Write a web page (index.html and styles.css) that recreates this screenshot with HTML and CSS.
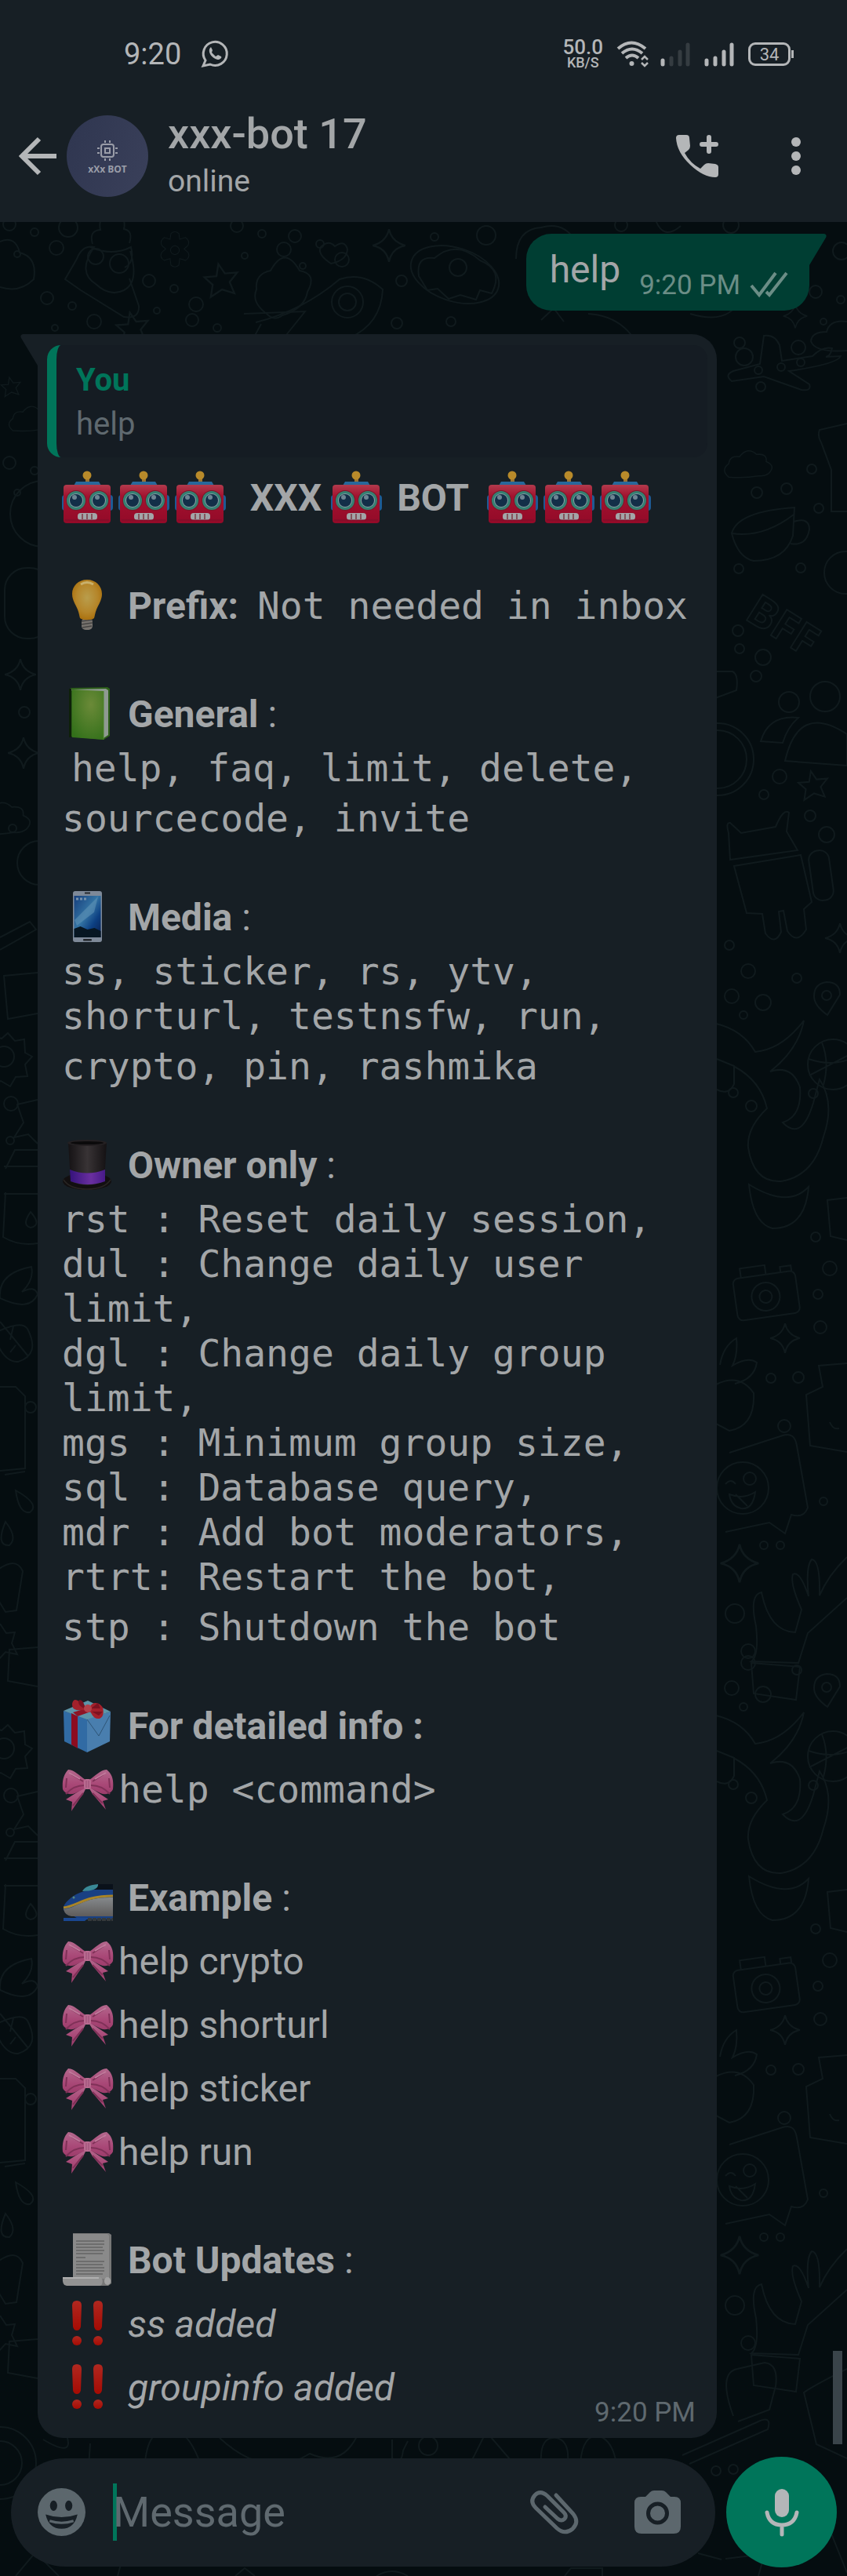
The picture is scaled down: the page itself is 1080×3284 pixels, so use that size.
FILE: index.html
```html
<!DOCTYPE html>
<html lang="en">
<head>
<meta charset="utf-8">
<meta name="viewport" content="width=device-width, initial-scale=1">
<title>xxx-bot 17</title>
<link rel="stylesheet" href="styles.css">
</head>
<body>
<svg class="defs" aria-hidden="true">
  <defs>
    <linearGradient id="g-red" x1="0" y1="0" x2="0" y2="1"><stop offset="0" stop-color="#b23a4c"/><stop offset=".3" stop-color="#a3122f"/><stop offset="1" stop-color="#930a28"/></linearGradient>
    <radialGradient id="g-bulb" cx=".5" cy=".45" r=".6"><stop offset="0" stop-color="#b99d4c"/><stop offset=".6" stop-color="#b5862a"/><stop offset="1" stop-color="#a86c08"/></radialGradient>
    <radialGradient id="g-book" cx=".6" cy=".3" r=".8"><stop offset="0" stop-color="#6b8a38"/><stop offset="1" stop-color="#33701a"/></radialGradient>
    <linearGradient id="g-phone" x1="0" y1="0" x2="1" y2="1"><stop offset="0" stop-color="#163e7c"/><stop offset=".45" stop-color="#3474a4"/><stop offset=".7" stop-color="#0c3f82"/><stop offset="1" stop-color="#0a1e4d"/></linearGradient>
    <linearGradient id="g-hat"><stop offset="0" stop-color="#151214"/><stop offset=".5" stop-color="#383335"/><stop offset="1" stop-color="#141113"/></linearGradient>
    <linearGradient id="g-band"><stop offset="0" stop-color="#35137b"/><stop offset=".6" stop-color="#6a2f9f"/><stop offset="1" stop-color="#471a88"/></linearGradient>
    <linearGradient id="g-bow" x1="0" y1="0" x2="0" y2="1"><stop offset="0" stop-color="#b3688d"/><stop offset=".6" stop-color="#a94877"/><stop offset="1" stop-color="#9c3c6b"/></linearGradient>
    <linearGradient id="g-train" x1="0" y1="0" x2="0" y2="1"><stop offset="0" stop-color="#85898c"/><stop offset="1" stop-color="#5e5c5b"/></linearGradient>
    <linearGradient id="g-bang" x1="0" y1="0" x2="0" y2="1"><stop offset="0" stop-color="#b02820"/><stop offset="1" stop-color="#a50b03"/></linearGradient>

    <symbol id="robot" viewBox="0 0 66 68">
      <rect x="30" y="10" width="5" height="9" fill="#9a7130"/><circle cx="32" cy="6" r="5.500" fill="#b88a2a"/>
      <path d="M15 19l3-5h29l3 5z" fill="#28689a"/>
      <rect x="0" y="31" width="8" height="20" rx="4" fill="#1e5a94"/><rect x="57" y="31" width="8" height="20" rx="4" fill="#1e5a94"/>
      <rect x="2" y="18" width="60" height="49" rx="4" fill="url(#g-red)"/>
      <circle cx="18" cy="38" r="13" fill="#7c1728"/><circle cx="47" cy="38" r="13" fill="#7c1728"/>
      <circle cx="18" cy="38" r="12" fill="#358072"/><circle cx="47" cy="38" r="12" fill="#358072"/>
      <circle cx="18" cy="38" r="9" fill="#889ba4"/><circle cx="47" cy="38" r="9" fill="#889ba4"/>
      <circle cx="18" cy="38" r="8" fill="#132f48"/><circle cx="47" cy="38" r="8" fill="#132f48"/>
      <circle cx="16" cy="34" r="3" fill="#6d8593"/><circle cx="45" cy="34" r="3" fill="#6d8593"/>
      <rect x="20" y="54" width="25" height="9" rx="4" fill="#a3a5a8"/><path d="M26 55v7M32 55v7M38 55v7" stroke="#7b3942" stroke-width="1.500"/>
      <path d="M4 63h56" stroke="#77102a" stroke-width="1"/>
    </symbol>
    <symbol id="bulb" viewBox="0 0 66 68">
      <rect x="25" y="50" width="14" height="15" rx="5" fill="#77736e"/><path d="M25 54l14-2M25 58l14-2M26 62l12-2" stroke="#454443" stroke-width="1.500"/>
      <path d="M32 1c11 0 19 8 19 18 0 8-4 13-7 20-2 5-2 8-3 11-3 3-15 3-18 0-1-3-1-6-3-11-3-7-7-12-7-20C13 9 21 1 32 1z" fill="url(#g-bulb)"/>
      <path d="M24 7q8-5 16 0" stroke="#c9b16c" stroke-width="3" fill="none"/>
    </symbol>
    <symbol id="book" viewBox="0 0 66 68">
      <path d="M11 1l47-1 3 2v60l-8 5-42-4z" fill="#2d5f19"/><path d="M12 3l44-1 3 2v57l-6 4z" fill="#8f9a92"/>
      <path d="M13 3l40 2v62l-40-3z" fill="url(#g-book)"/><path d="M9 2h3v62H9z" fill="#0e2009"/><path d="M53 5v62" stroke="#4a8429" stroke-width="1"/>
    </symbol>
    <symbol id="phone" viewBox="0 0 66 68">
      <rect x="14" y="1" width="37" height="65" rx="3" fill="#7e8998"/><rect x="15.500" y="7" width="34" height="53" fill="url(#g-phone)"/>
      <path d="M16 38l30-30-5 20-22 17z" fill="#5f92b5" opacity=".6"/><path d="M15.500 49l8-3 9 4 9-2 8 4v8h-34z" fill="#071622"/>
      <rect x="29" y="2.500" width="7" height="2" fill="#272a2e"/><rect x="27" y="62" width="11" height="2.500" rx="1" fill="#22262b"/>
      <path d="M18 11h3M23 11h3M28 11h3" stroke="#7791ac" stroke-width="3"/>
    </symbol>
    <symbol id="hat" viewBox="0 0 66 68">
      <ellipse cx="32" cy="55" rx="31" ry="11" fill="#120f10"/><path d="M2 53q8 12 30 12t30-12" stroke="#292523" stroke-width="1.500" fill="none"/>
      <path d="M8 6q24-5 49 0l-3 49q-22 9-43 0z" fill="url(#g-hat)"/><path d="M10 40q22 9 45 0v15q-22 8-44 0z" fill="url(#g-band)"/>
      <ellipse cx="32" cy="6" rx="25" ry="4" fill="#242022"/><ellipse cx="32" cy="6" rx="21" ry="2" fill="#0b0a0b"/>
    </symbol>
    <symbol id="gift" viewBox="0 0 66 68">
      <path d="M2 15L32 25v43L3 54z" fill="#316ba4"/><path d="M32 25l30-9-1 38-29 14z" fill="#497eae"/><path d="M2 15L33 2l29 14-30 10z" fill="#5d94a8"/>
      <path d="M12 18l8 4v41l-8-5z" fill="#8c0c20"/><path d="M14 17L44 8l7 3-31 11z" fill="#8d1525"/>
      <path d="M32 26l15 21 14-26" stroke="#2e5577" stroke-width="1" fill="none"/>
      <path d="M31 14c-10-14-16-17-18-8 0 8 4 9 18 8zM34 14c4-14 15-9 18-3 2 7 0 14-6 14-7 0-8-8-12-11z" fill="#a3202b"/><path d="M30 12c-3-12-8-12-9-9 0 5 4 8 9 9zM37 12l9-7 3 7zM38 16l9 5 5-5z" fill="#7b1220"/><circle cx="33" cy="12" r="5" fill="#b5414a"/>
    </symbol>
    <symbol id="bow" viewBox="0 0 66 68">
      <path d="M30 31L5 47l8 3-1 12 16-24 4-8zM35 31l24 16-7 2 4 11-17-20-6-10z" fill="url(#g-bow)"/>
      <path d="M30 22C21 16 17 10 8 9 2 15 0 24 1 34c2 5 9 8 16 5l14-7zM35 22c9-6 13-12 22-13 8 6 9 15 8 25-2 5-9 8-16 5l-14-7z" fill="url(#g-bow)"/>
      <path d="M29 29Q15 29 5 40M37 29q14 0 24 11M27 24L12 15M39 24l14-9M6 20l-1 12M60 20l1 12M27 39L14 55M39 39l13 13" stroke="#803158" stroke-width="2" fill="none"/>
      <path d="M9 13l14 8M56 13l-14 8" stroke="#c07b9c" stroke-width="2"/>
      <rect x="28" y="21" width="9" height="13" rx="3" fill="#b96b90"/><path d="M31 23v9M34 23v9" stroke="#984d75" stroke-width="1"/>
    </symbol>
    <symbol id="train" viewBox="0 0 66 68">
      <path d="M45 17h20v12H30z" fill="#0a111a"/><path d="M65 24v38H22L2 50C0 44 8 36 18 30q10-5 22-6z" fill="#194083"/>
      <path d="M2 49c18-2 26-16 63-15v24H12q-8-1-10-9z" fill="url(#g-train)"/><path d="M2 47c18-2 26-15 63-15" stroke="#a98427" stroke-width="3" fill="none"/>
      <path d="M26 26c3-6 10-8 20-9 1 6-8 9-20 9z" fill="#3a8997"/><path d="M2 60h32l-5 4H2z" fill="#1a4791"/><path d="M33 62h32" stroke="#35393a" stroke-width="4" stroke-dasharray="5 1"/><circle cx="15" cy="34" r="1.500" fill="#58877e"/>
    </symbol>
    <symbol id="scroll" viewBox="0 0 66 68">
      <path d="M14 0h46l3 2v62l-4 3H14z" fill="#777777"/><path d="M14 1h44l2 2v55H14z" fill="#8a8a8a"/>
      <path d="M18 10h36M18 14h36M18 18h34M18 22h36M18 26h34M18 31h12M18 36h36M18 40h34M18 44h36M18 48h36M18 52h34" stroke="#646464" stroke-width="1.500"/>
      <path d="M1 56h47c5 0 5 11 0 11H6q-6 0-5-11z" fill="#929292"/><path d="M1 57h46" stroke="#b0b0b0" stroke-width="2"/><ellipse cx="58" cy="61" rx="4" ry="5" fill="#a2a2a2"/>
    </symbol>
    <symbol id="bangs" viewBox="0 0 66 68">
      <g fill="url(#g-bang)"><path d="M19 5q6 0 6 6l-1 27q-1 5-5 5t-5-5l-1-27q0-6 6-6zM46 5q6 0 6 6l-1 27q-1 5-5 5t-5-5l-1-27q0-6 6-6z"/><circle cx="19" cy="56" r="6"/><circle cx="46" cy="56" r="6"/></g>
    </symbol>
    <symbol id="flower" viewBox="-50 -50 100 100"><circle r="10"/><path d="M-9-38q9-8 18 0l2 13 13-4q11 7 6 18l-9 8 9 8q6 12-6 18l-13-4-2 15q-9 8-18 0l-2-15-13 4q-12-6-6-18l9-8-9-8q-5-11 6-18l13 4z"/></symbol>
    <symbol id="star" viewBox="-20 -20 40 40"><path d="M-3-17L4-7l13-1-8 10 5 12-13-4-12 8 2-13-9-8 13-1z"/></symbol>
    <symbol id="spark" viewBox="-20 -20 40 40"><path d="M0-18Q3-4 18 0 3 3 0 18-3 3-18 0-3-4 0-18z"/></symbol>
    <symbol id="cloud" viewBox="-50 -30 100 60"><path d="M-38 20q-14-12 0-22 2-15 18-12 14-18 29-4 18-2 16 12 17 7 4 20-7 5-17 4-24 4-50 2z"/></symbol>
    <g id="bits"><circle cx="0" cy="0" r="8"/><circle cx="32" cy="10" r="5"/><circle cx="10" cy="38" r="4"/><circle cx="60" cy="30" r="9"/></g>
    <g id="tile">
      <path d="M1054 1252q17 0 17 16l-16 26q-17-12-17-24 0-16 16-18z"/><circle cx="1054" cy="1269" r="6"/>
      <circle cx="954" cy="1238" r="9"/><circle cx="933" cy="1270" r="9"/><circle cx="973" cy="1278" r="10"/><circle cx="1016" cy="1247" r="6"/><circle cx="948" cy="1294" r="5"/>
      <path d="M913 1305q34 8 50 36 34-3 62-40-7 37-43 65 28-9 38 20 3 37-22 45 24 25 39-25l8-30q20 30 5 73-12 50-54 57-35 2-42-43-2-25 24-50-8-35-41-53M955 1510q5 50 30 56 42 0 46-53-26 28-76-3z"/>
      <circle cx="1062" cy="1357" r="32"/><path d="M1031 1350q35 12 63-5M1048 1329q10 25 2 54M1032 1371l60-31"/>
      <path d="M914 1350l22 9v23q-7 15-22 7M1080 1527l-25 3 4 46 21 5"/><circle cx="935" cy="1393" r="6"/><circle cx="958" cy="1410" r="7"/><circle cx="1037" cy="1394" r="6"/>
      <g transform="rotate(-8 976 1650)"><rect x="937" y="1625" width="80" height="54" rx="7"/><circle cx="976" cy="1653" r="18"/><circle cx="976" cy="1653" r="8"/><path d="M948 1625v-12h32v12M999 1625v-7h14v7"/></g>
      <circle cx="1040" cy="1577" r="6"/><circle cx="1058" cy="1617" r="9"/><circle cx="1043" cy="1650" r="6"/><circle cx="1046" cy="1692" r="8"/>
      <use href="#spark" x="980" y="1685" width="42" height="42"/>
      <path d="M913 1765q30-15 48 11 2 42-31 48l-17-9M918 1740q4-24 21-34 2 21-5 35 20-12 31-4-3 21-28 27"/>
      <circle cx="983" cy="1757" r="6"/><circle cx="1018" cy="1756" r="7"/><circle cx="1000" cy="1818" r="8"/>
      <path d="M1080 1738l-36 3 5 27-21 10 5 65 47 8"/><path d="M1058 1813q4 10 12 8"/>
      <path d="M930 1852l68-22q15-5 18 13l14 79q-5 14-21 9l-8 24-20-14-56 12"/><circle cx="947" cy="1897" r="33"/><path d="M930 1905q18 7 33-3-3 23-18 21-13-3-15-18zM938 1905l15 15M925 1892q7-8 13 0"/><circle cx="956" cy="1885" r="8"/>
      <circle cx="1050" cy="1914" r="5"/><circle cx="974" cy="1970" r="5"/><circle cx="995" cy="1970" r="5"/>
      <use href="#spark" x="916" y="1966" width="54" height="54"/>
      <path d="M1080 1985q-24 23-35 49 1-45-10-46-8 9-4 47-11-33-20-28-4 11 11 45l-8 29q-33-1-43-51-16 3-7 43 4 38-6 45l60 2 12-38 50-45M958 2120l62 5-5 42-54-8z"/>
      <circle cx="937" cy="2057" r="12"/><circle cx="954" cy="2105" r="9"/>
      <path d="M-10 1320l12 4 8-7 9 10 12-2 1 17 9 5-9 10 3 15-15 1-7 12-12-7-10 4"/><circle cx="5" cy="1347" r="13"/>
      <circle cx="14" cy="1407" r="9"/><path d="M48 1402l-26 6 8 23-12 19 18-4 12 12"/><circle cx="13" cy="1454" r="5"/>
      <path d="M5 1487h43M7 1490l12-24h29M7 1520l-3 57q20 12 44 8M5 1522h43M39 1545q15 17 0 20-12-3 0-20z"/>
      <path d="M0 1655q-3-32 40-40 4 16-12 32 16-9 20 3-10 23-48 5zM-8 1700q35-18 43-6 17 33-12 42-20 1-31-36M0 1685l36 44M13 1708l4-17M20 1715l-7 9"/>
      <path d="M0 1768h20l12 12v92l-32 3M6 1880l26-4"/><circle cx="39" cy="1794" r="7"/>
      <path d="M20 1900q4 30 18 28 14-10-18-28zM7 1940q-13 31 5 30 11-10-5-30zM-5 2003q25-20 34 0l-8 50-14 2-12-20M0 2070l8 12 11-1-4 14 7 14-15-3-9 10M48 2100l-36 3-2 40 38 7"/>
    </g>
  </defs>
</svg>

<header class="top">
  <div class="status">
    <div class="status-side">
      <time class="clock">9:20</time>
      <svg class="wa" viewBox="0 0 34 34" fill="none" stroke="#b4b6b8" stroke-width="3"><path d="M2 32l3-7a15 15 0 1 1 6 5z"/><path d="M11 9c-4 5 3 15 11 15 3-1 4-3 3-4l-4-2-3 2-5-5 1-3-2-4z" fill="#b4b6b8" stroke="none"/></svg>
    </div>
    <div class="status-side">
      <div class="speed"><span class="rate">50.0</span><span class="unit">KB/S</span></div>
      <svg class="wifi" viewBox="0 0 40 32" fill="none" stroke="#b4b6b8" stroke-width="4"><path d="M1 9q17-15 35 0M6 15q13-11 26 0M11 21q8-7 16 0"/><circle cx="18.500" cy="28" r="3" fill="#b4b6b8" stroke="none"/><path d="M31 23l4-4 4 4M31 27l4 4 4-4" stroke-width="2.500"/></svg>
      <svg class="signal" viewBox="0 0 38 32" stroke-width="5" stroke-linecap="round"><path d="M3 24v5" stroke="#b4b6b8"/><path d="M14 21v8M25 13v16M35 4v25" stroke="#353c41"/></svg>
      <svg class="signal" viewBox="0 0 38 32" stroke-width="5" stroke-linecap="round" stroke="#b4b6b8"><path d="M3 24v5M14 21v8M25 13v16M35 4v25"/></svg>
      <div class="battery">34</div>
    </div>
  </div>
  <div class="appbar">
    <button class="back" aria-label="Back"><svg viewBox="0 0 48 48" fill="none" stroke="#b4b6b8" stroke-width="6"><path d="M48 24H5M26 2L4 24l22 22"/></svg></button>
    <div class="avatar"><svg viewBox="0 0 26 26" fill="none" stroke="#9a9da8" stroke-width="2"><rect x="5" y="5" width="16" height="16" rx="3"/><rect x="10" y="10" width="6" height="6"/><path d="M10 0v3M16 0v3M10 23v3M16 23v3M0 10h3M0 16h3M23 10h3M23 16h3"/></svg><span>xXx BOT</span></div>
    <div class="who"><h1>xxx-bot 17</h1><p>online</p></div>
    <button class="call" aria-label="Call"><svg viewBox="0 0 54 54" fill="#b4b6b8"><path d="M4 0h9q4 0 4 4l1 10q0 3-2 5l-5 4q7 13 20 20l5-5q2-2 5-2l9 1q4 1 4 4v9q0 4-4 4Q35 54 18 38T0 4q0-4 4-4z"/><path d="M42 3v18M33 12h18" stroke="#b4b6b8" stroke-width="6" stroke-linecap="round"/></svg></button>
    <button class="more" aria-label="More options"><svg viewBox="0 0 12 48" fill="#b4b6b8"><circle cx="6" cy="6" r="6"/><circle cx="6" cy="24" r="6"/><circle cx="6" cy="42" r="6"/></svg></button>
  </div>
</header>

<main class="chat">
  <svg class="wallpaper" viewBox="0 283 1080 3001" preserveAspectRatio="xMidYMin slice" fill="none" stroke="#101a1d" stroke-width="2" aria-hidden="true">
    <use href="#bits" x="12" y="286"/><circle cx="87" cy="290" r="12"/><path d="M118 311q-5-17 10-18-4-17 14-21 20 2 16 20 12 2 7 18M115 315q28 12 52 0 5 20-8 26M98 330q7-18 22-15-22 32 2 47 18 17 36 8 20-10 8-50M98 330l-15 26 20 14 55 34q20 3 19-14l-12-35"/><circle cx="122" cy="327" r="10"/><circle cx="152" cy="336" r="12"/>
    <use href="#flower" x="195" y="284" width="56" height="70"/><use href="#bits" x="302" y="288"/><use href="#bits" x="376" y="301"/><use href="#star" x="258" y="333" width="48" height="48"/>
    <path d="M340 400q-20-15-13-31-2-20 18-24 18-33 37 0 23 4 10 27-3 21-32 30-10 8-20-2zM422 336q-18-12-13-21 10-10 18-1 13-9 16 4-1 14-21 18z"/>
    <path d="M0 308q20-8 25 14 23 6 18 34-18 18-43 10M326 411q60-15 107-55 30-10 55 13-2 44-43 62M311 400l78-3-24 30M333 413l-12 22"/><circle cx="443" cy="385" r="20"/><circle cx="443" cy="385" r="11"/>
    <use href="#spark" x="473" y="286" width="46" height="54"/><circle cx="584" cy="341" r="11"/><ellipse cx="580" cy="350" rx="58" ry="34" transform="rotate(18 580 350)"/><path d="M534 352q-4-26 20-23 28-24 58 3 31 12 15 42l-15-4-5 12-20-6-15 5-14-13-13 2z"/>
    <circle cx="620" cy="300" r="12"/><circle cx="554" cy="302" r="5"/><circle cx="512" cy="358" r="7"/><circle cx="506" cy="412" r="7"/><circle cx="575" cy="410" r="6"/><use href="#bits" x="60" y="380"/><use href="#bits" x="190" y="358"/><use href="#star" x="146" y="395" width="46" height="46"/><use href="#bits" x="245" y="408"/>
    <path d="M658 330q0-38 32-40 28-8 43 16M835 278q10 30 33 10M690 408l16-15 13 17M750 400q35 2 55 27M880 400q50 15 64-20"/><circle cx="792" cy="287" r="8"/><circle cx="932" cy="287" r="10"/><use href="#bits" x="1040" y="372"/><circle cx="1073" cy="320" r="11"/>
    <use href="#star" x="0" y="470" width="28" height="46"/><use href="#cloud" x="8" y="510" width="70" height="50"/><use href="#bits" x="12" y="590"/><circle cx="55" cy="655" r="42"/><rect x="6" y="724" width="60" height="90" rx="28"/><use href="#spark" x="4" y="830" width="44" height="60"/><use href="#spark" x="8" y="935" width="44" height="50"/><use href="#cloud" x="-38" y="1010" width="90" height="70"/><circle cx="50" cy="1100" r="28"/><circle cx="16" cy="1056" r="5"/><circle cx="31" cy="908" r="7"/><path d="M0 1195l38-20 8 10-46 26M48 1240l-43 4 5 55 38-7"/>
    <use href="#spark" x="992" y="386" width="44" height="34"/><path d="M1080 410q-22-3-26 13-19 0-20 12 5 15 46 12"/>
    <path d="M969 464l5-36q14-2 20 12l3 20 39-6q13-13 25-10-2 10-8 11l19-1q-4 10-66 19l26 17q3 9-10 7l-48-17-41 6q-10-8 2-13z"/><circle cx="943" cy="437" r="7"/><circle cx="949" cy="455" r="11"/><circle cx="1018" cy="443" r="9"/><circle cx="967" cy="472" r="5"/><circle cx="996" cy="468" r="5"/><circle cx="1021" cy="462" r="5"/><circle cx="970" cy="493" r="6"/>
    <use href="#cloud" x="920" y="565" width="76" height="56"/><path d="M1080 540l-35 8q-3 8 2 16l13 35v53h20"/><circle cx="1035" cy="598" r="6"/><circle cx="1003" cy="623" r="7"/><circle cx="965" cy="628" r="7"/><circle cx="1044" cy="648" r="6"/>
    <path d="M933 680q7-28 80-33l-2 36q-10 32-50 32-20-4-28-35 40 6 79-24M1012 665q20-6 20 10-4 22-24 18"/><circle cx="942" cy="725" r="6"/><circle cx="1021" cy="724" r="6"/><circle cx="1078" cy="730" r="27"/>
    <text class="bff" x="948" y="788" transform="rotate(32 948 788)">BFF</text>
    <circle cx="973" cy="838" r="10"/><circle cx="941" cy="804" r="7"/><circle cx="964" cy="862" r="7"/><circle cx="943" cy="827" r="6"/><path d="M912 856h22q8 4 5 24l-27 10"/>
    <circle cx="1006" cy="895" r="13"/><circle cx="1052" cy="888" r="19"/><path d="M970 945q10-34 48-30-14 12-20 32zM1001 970q17-75 79-34v40z"/>
    <circle cx="915" cy="968" r="46"/><circle cx="915" cy="968" r="37"/><circle cx="994" cy="990" r="9"/><circle cx="974" cy="1013" r="6"/><use href="#star" x="1016" y="980" width="42" height="42"/>
    <path d="M931 1096l-2-34q-4-14 2-13l14 13 44-8q10-24 17-18l-3 24 14 24zM936 1104l85-14 14 60-10 9 3 26q-12 20-24 2l-5-26-6 1 3 26q-8 18-20 2l-4-25-20-1z"/><rect x="1034" y="1084" width="26" height="64" rx="12" transform="rotate(-8 1047 1116)"/>
    <circle cx="1033" cy="1040" r="7"/><circle cx="1054" cy="1064" r="10"/><circle cx="930" cy="1205" r="6"/><use href="#spark" x="1050" y="1175" width="42" height="42"/>
    <use href="#tile"/><use href="#tile" y="882"/>
    <path d="M935 3080q-20-55 5-60l35-8q18 2 14 30l-8 30-40 15M870 3130l95-42q20-10 14 9l-100 44M1080 3020q-40 20-55 30l16 66 39 18M55 3110q40 24 30-5M115 3115l-2 30M185 3138q5-46 34-38 18-4 34 34M280 3108q60 55 115 20 40 18 60-22M500 3110v24q12 10 14-10l6-12M600 3140l20-40 30 35M690 3140q-2-35 20-32 16 4 14 30M740 3140q3-38 25-34 15 6 20 30"/><circle cx="546" cy="3118" r="12"/>
    <circle cx="0" cy="3140" r="46"/><circle cx="0" cy="3140" r="28"/><circle cx="913" cy="3150" r="6"/><circle cx="935" cy="3148" r="6"/><path d="M20 3284l25-30 30 30M150 3284l6-22M890 3255l30 8M1060 3230l20 50M925 3262l50-6-8 28M300 3284l12-10 13 10M480 3284q20-12 40 0M720 3284l8-10h40v10"/>
  </svg>

  <section class="messages">
    <article class="bubble out">
      <svg class="tail" viewBox="0 0 22 40" aria-hidden="true"><path d="M0 0h19q4 1 2 5L0 40z" fill="#003e33"/></svg>
      <p>help</p>
      <time>9:20 PM</time>
      <svg class="ticks" viewBox="0 0 48 32" fill="none" stroke="#6b8d86" stroke-width="4"><path d="M1 18l10 12L32 2M20 26l4 4L46 2"/></svg>
    </article>

    <article class="bubble in">
      <svg class="tail" viewBox="0 0 22 40" aria-hidden="true"><path d="M22 0H3Q-1 1 1 5l21 35z" fill="#171f25"/></svg>
      <blockquote><strong>You</strong><span>help</span></blockquote>
      <div class="body">
        <section><h2 class="title"><svg class="emo" role="img" aria-label="Robot"><use href="#robot"/></svg><svg class="emo"><use href="#robot"/></svg><svg class="emo"><use href="#robot"/></svg>  XXX <svg class="emo"><use href="#robot"/></svg> BOT  <svg class="emo"><use href="#robot"/></svg><svg class="emo"><use href="#robot"/></svg><svg class="emo"><use href="#robot"/></svg></h2></section>
        <section><p class="head"><svg class="emo"><use href="#bulb"/></svg> <b>Prefix:</b>  <code>Not needed in inbox</code></p></section>
        <section>
          <p class="head"><svg class="emo"><use href="#book"/></svg> <b>General</b> :</p>
          <p class="mono"> <code>help, faq, limit, delete,</code></p>
          <p class="mono last"><code>sourcecode, invite</code></p>
        </section>
        <section>
          <p class="head"><svg class="emo"><use href="#phone"/></svg> <b>Media</b> :</p>
          <p class="mono"><code>ss, sticker, rs, ytv, shorturl, testnsfw, run,</code></p>
          <p class="mono last"><code>crypto, pin, rashmika</code></p>
        </section>
        <section>
          <p class="head"><svg class="emo"><use href="#hat"/></svg> <b>Owner only</b> :</p>
          <p class="mono"><code>rst : Reset daily session,</code></p>
          <p class="mono"><code>dul : Change daily user limit,</code></p>
          <p class="mono"><code>dgl : Change daily group limit,</code></p>
          <p class="mono"><code>mgs : Minimum group size,</code></p>
          <p class="mono"><code>sql : Database query,</code></p>
          <p class="mono"><code>mdr : Add bot moderators,</code></p>
          <p class="mono"><code>rtrt: Restart the bot,</code></p>
          <p class="mono last"><code>stp : Shutdown the bot</code></p>
        </section>
        <section>
          <p class="head"><svg class="emo"><use href="#gift"/></svg> <b>For detailed info :</b></p>
          <p class="item"><svg class="emo"><use href="#bow"/></svg><code>help &lt;command&gt;</code></p>
        </section>
        <section>
          <p class="head"><svg class="emo"><use href="#train"/></svg> <b>Example</b> :</p>
          <p class="item"><svg class="emo"><use href="#bow"/></svg>help crypto</p>
          <p class="item"><svg class="emo"><use href="#bow"/></svg>help shorturl</p>
          <p class="item"><svg class="emo"><use href="#bow"/></svg>help sticker</p>
          <p class="item"><svg class="emo"><use href="#bow"/></svg>help run</p>
        </section>
        <section>
          <p class="head"><svg class="emo"><use href="#scroll"/></svg> <b>Bot Updates</b> :</p>
          <p class="item"><svg class="emo"><use href="#bangs"/></svg> <i>ss added</i></p>
          <div class="final"><p class="item"><svg class="emo"><use href="#bangs"/></svg> <i>groupinfo added</i></p><time>9:20 PM</time></div>
        </section>
      </div>
    </article>
  </section>

  <form class="composer">
    <div class="field">
      <button type="button" class="smile" aria-label="Emoji"><svg viewBox="0 0 60 60"><circle cx="30" cy="30" r="30" fill="#5c676d"/><g fill="#171f25"><ellipse cx="20" cy="22" rx="4.500" ry="6.500"/><ellipse cx="39" cy="22" rx="4.500" ry="6.500"/><path d="M10 33q20 7 40 0-4 18-20 18T10 33z"/></g><path d="M15 41q15 5 30 0" stroke="#5c676d" stroke-width="3" fill="none"/></svg></button>
      <label class="entry"><span class="caret"></span><input type="text" placeholder="Message" aria-label="Message"></label>
      <button type="button" class="clip" aria-label="Attach"><svg viewBox="0 0 62 56" fill="none" stroke="#5c676d" stroke-width="5" stroke-linecap="round" stroke-linejoin="round"><path d="M19 21l16 15q5 4 9 0 3-4-1-8L22 7Q13-1 6 6q-7 8 1 16l27 26q10 9 20 1 9-9 1-19L33 6"/></svg></button>
      <button type="button" class="camera" aria-label="Camera"><svg viewBox="0 0 59 55"><path d="M20 2q2-2 5-2h10q3 0 5 2l6 6h5q8 0 8 8v30q0 9-9 9H9q-9 0-9-9V16q0-8 8-8h6z" fill="#5c676d"/><circle cx="29.500" cy="29" r="12" fill="none" stroke="#171f25" stroke-width="5"/></svg></button>
    </div>
    <button type="button" class="mic" aria-label="Voice message"><svg viewBox="0 0 44 60" fill="none" stroke="#b4b6b8" stroke-width="5" stroke-linecap="round"><rect x="13" y="0" width="18" height="36" rx="9" fill="#b4b6b8" stroke="none"/><path d="M3 30q3 16 19 16t19-16M22 47v11"/></svg></button>
  </form>
  <div class="thumb"></div>
</main>
</body>
</html>
```
FILE: styles.css
```css
* { box-sizing: border-box; margin: 0; padding: 0; }
body {
  min-height: 100vh;
  display: flex;
  flex-direction: column;
  background: #050d10;
  color: #a3a6a8;
  font-family: Roboto, "Liberation Sans", sans-serif;
  font-size: 48px;
}
button { background: none; border: 0; display: flex; align-items: center; justify-content: center; flex: none; }
svg { display: block; overflow: visible; flex: none; }
.defs { position: absolute; width: 0; height: 0; }

.top { background: #171f25; height: 283px; }
.status { display: flex; justify-content: space-between; align-items: center; height: 138px; padding: 0 72px 0 158px; }
.status-side { display: flex; align-items: center; }
.clock { font-size: 38px; color: #b4b6b8; margin-right: 26px; }
.wa { width: 34px; height: 34px; }
.speed { display: flex; flex-direction: column; align-items: center; color: #b4b6b8; font-weight: 500; margin-right: 18px; }
.rate { font-size: 26px; line-height: 22px; }
.unit { font-size: 18px; line-height: 18px; }
.wifi { width: 40px; height: 32px; margin-right: 15px; }
.signal { width: 38px; height: 32px; margin-right: 18px; }
.battery {
  position: relative;
  width: 54px; height: 30px;
  border: 3px solid #b4b6b8; border-radius: 9px;
  color: #b4b6b8; font-size: 22px; line-height: 25px; text-align: center;
}
.battery::after { content: ""; position: absolute; right: -7px; top: 7px; width: 3px; height: 10px; background: #b4b6b8; }

.appbar { display: flex; align-items: center; height: 122px; padding: 0 59px 0 24px; }
.back svg { width: 48px; height: 48px; }
.avatar {
  width: 104px; height: 104px; margin: 0 25px 0 13px;
  border-radius: 50%;
  background: linear-gradient(110deg, #2f3650, #3a405a);
  display: flex; flex-direction: column; align-items: center; justify-content: flex-end;
  padding-bottom: 27px; gap: 3px;
}
.avatar svg { width: 26px; height: 26px; }
.avatar span { font: 700 12px/16px "Open Sans", sans-serif; color: #9a9da8; }
.who { flex: 1; }
.who h1 { font-size: 54px; line-height: 64px; font-weight: 500; }
.who p { font-size: 39px; line-height: 56px; }
.call { margin-right: 93px; }
.call svg { width: 54px; height: 54px; }
.more svg { width: 12px; height: 48px; }

.chat { position: relative; flex: 1; display: flex; flex-direction: column; justify-content: space-between; overflow: hidden; }
.wallpaper { position: absolute; left: 0; top: 0; width: 100%; height: 100%; }
.bff { font: 700 54px "Open Sans", sans-serif; }
.messages { position: relative; display: flex; flex-direction: column; gap: 30px; padding: 15px 48px 0; }
.bubble { position: relative; background: #171f25; border-radius: 32px; }
.bubble time { font-size: 35px; line-height: 48px; }
.tail { position: absolute; top: 0; width: 22px; height: 40px; }
.out {
  align-self: flex-end;
  display: flex; align-items: flex-end;
  height: 98px; padding: 0 27px 8px 30px;
  background: #003e33; border-top-right-radius: 0;
}
.out p { line-height: 64px; margin: 0 24px 12px 0; }
.out time { color: #6b8d86; margin-right: 13px; }
.out .ticks { width: 48px; height: 32px; margin-bottom: 10px; }
.out .tail { left: 100%; }

.in { width: 88%; border-top-left-radius: 0; padding: 14px 12px 24px; }
.in .tail { right: 100%; }
blockquote {
  border-radius: 18px; border-left: 12px solid #00755a; background: #151c23;
  padding: 19px 25px; height: 143px;
  display: flex; flex-direction: column; font-size: 40px;
}
blockquote strong { color: #00755a; line-height: 52px; }
blockquote span { color: #5f696f; line-height: 60px; }
.body { padding: 12px 15px 0 19px; display: flex; flex-direction: column; gap: 58px; white-space: pre-wrap; }
.body section { display: flex; flex-direction: column; }
.title { font-size: 48px; font-weight: 700; line-height: 80px; }
.head { line-height: 80px; }
.item { line-height: 81px; }
.mono { line-height: 57px; }
.last { margin-top: 7px; }
code { font-family: "DejaVu Sans Mono", monospace; font-size: 48px; line-height: 40px; }
.emo { display: inline-block; width: 66px; height: 68px; margin-right: 6px; vertical-align: -17px; }
.final { display: flex; justify-content: space-between; align-items: flex-end; }
.final time { color: #5f696f; margin: 0 0 -16px; }

.composer { position: relative; display: flex; align-items: center; gap: 14px; padding: 0 13px 11px 14px; }
.field { flex: 1; display: flex; align-items: center; height: 138px; border-radius: 69px; background: #171f25; padding: 0 44px 0 34px; }
.smile svg { width: 61px; height: 61px; }
.entry { flex: 1; min-width: 0; display: flex; align-items: center; margin-left: 35px; }
.caret { flex: none; width: 5px; height: 73px; margin-right: -5px; background: #00755a; }
input { flex: 1; min-width: 0; width: 100%; border: 0; outline: 0; background: transparent; color: #a3a6a8; font: 54px Roboto, sans-serif; }
input::placeholder { color: #5f696f; opacity: 1; }
.clip { margin-right: 71px; }
.clip svg { width: 62px; height: 56px; }
.camera svg { width: 59px; height: 55px; }
.mic { width: 141px; height: 141px; border-radius: 50%; background: #00755a; }
.mic svg { width: 44px; height: 60px; }
.thumb { position: absolute; right: 6px; bottom: 168px; width: 12px; height: 119px; background: #3a444a; }
```
